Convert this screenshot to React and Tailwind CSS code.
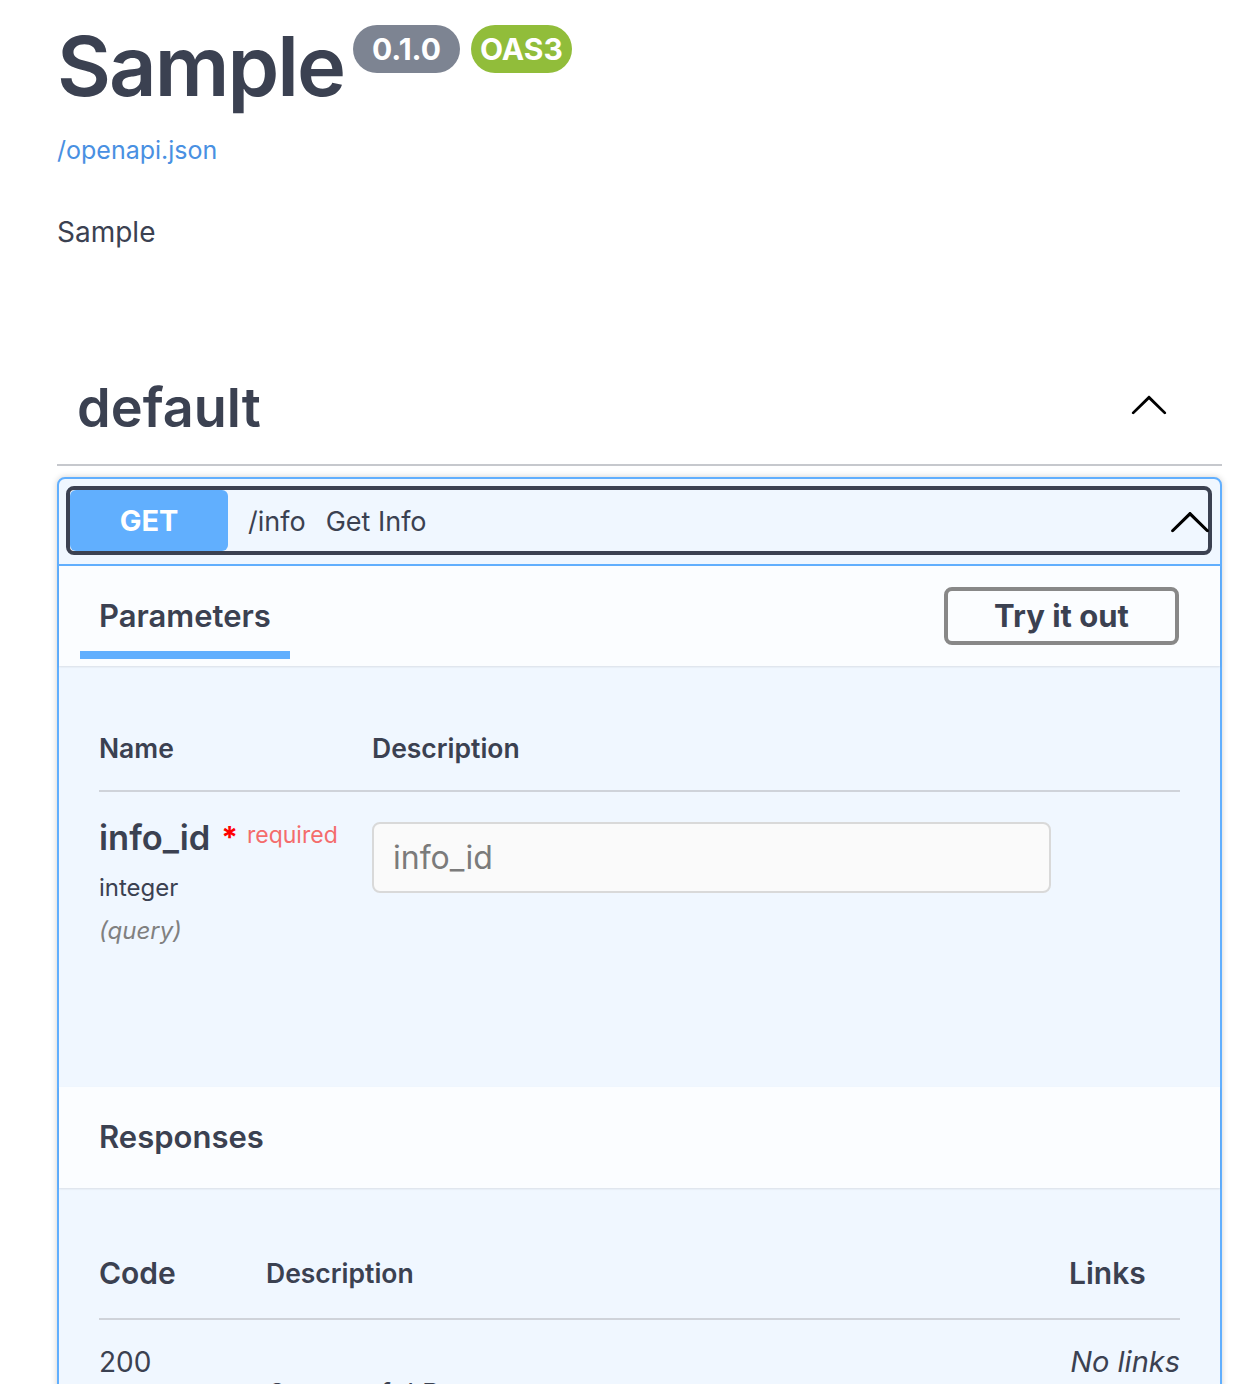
import React from 'react';

function Chevron({ className = "" }) {
  // swagger-ui style arrow, pointing up (expanded)
  return (
    <svg viewBox="0 0 20 20" className={className} fill="currentColor">
      <path d="M 17.418 14.908 C 17.69 15.176 18.127 15.176 18.397 14.908 C 18.667 14.64 18.668 14.207 18.397 13.939 L 10.489 6.109 C 10.219 5.841 9.782 5.841 9.51 6.109 L 1.602 13.939 C 1.332 14.207 1.332 14.64 1.602 14.908 C 1.873 15.176 2.311 15.176 2.581 14.908 L 10 7.767 L 17.418 14.908 Z" />
    </svg>
  );
}

export default function App() {
  return (
    <div className="h-[1384px] overflow-hidden bg-white font-['Inter','Noto_Sans',sans-serif] text-[#3b4151]">
      {/* info */}
      <section className="pl-[57px] pt-[24px]">
        <div className="flex items-start">
          <h2 className="text-[83px] leading-[84px] font-semibold tracking-[-2px]">Sample</h2>
          <div className="flex gap-[11px] ml-[9px] mt-[1px]">
            <span className="h-[48px] px-[19px] rounded-full bg-[#7d8492] text-white font-bold text-[30px] leading-[48px]">0.1.0</span>
            <span className="h-[48px] px-[9px] rounded-full bg-[#91bd3a] text-white font-bold text-[30px] leading-[48px]">OAS3</span>
          </div>
        </div>
        <a className="block mt-[22px] text-[25px] leading-[40px] text-[#4990e2]">/openapi.json</a>
        <p className="mt-[42px] text-[28px] leading-[40px]">Sample</p>
      </section>

      <div className="ml-[57px] w-[1165px]">
        {/* tag header */}
        <div className="mt-[98px] h-[116px] flex items-center justify-between pl-[20px] border-b-2 border-[#c6c8cd]">
          <h3 className="text-[54px] font-semibold leading-[64px] mt-[2px]">default</h3>
          <Chevron className="w-[40px] h-[40px] mr-[53px] mt-[-6px] text-black" />
        </div>

        {/* operation */}
        <div className="mt-[11px] border-2 border-[#61affe] rounded-[8px] bg-[#f0f7ff] shadow-[0_0_6px_rgba(0,0,0,0.19)]">
          <div className="pt-[7px] pl-[7px] pr-[8px] pb-[9px] border-b-2 border-[#61affe]">
            <div className="flex items-center border-4 border-[#3b4151] rounded-[8px]">
              <span className="w-[158px] h-[61px] rounded-[6px] bg-[#61affe] text-white font-bold text-[29px] leading-[61px] text-center">GET</span>
              <span className="ml-[20px] pt-[3px] text-[27px]">/info</span>
              <span className="ml-[20px] pt-[3px] text-[27px]">Get Info</span>
              <Chevron className="ml-auto mr-[-4px] w-[44px] h-[44px] text-black" />
            </div>
          </div>

          {/* parameters tab */}
          <div className="h-[100px] flex items-stretch justify-between pl-[21px] pr-[41px] bg-[#fbfdff] shadow-[0_1px_2px_rgba(0,0,0,0.1)]">
            <div className="flex flex-col justify-end pb-[7px]">
              <span className="px-[19px] text-[31px] font-semibold leading-[40px]">Parameters</span>
              <span className="mt-[15px] h-[8px] bg-[#61affe]"></span>
            </div>
            <button className="self-center w-[235px] h-[58px] border-4 border-[#888] rounded-[8px] text-[31px] font-bold leading-[50px]">Try it out</button>
          </div>

          {/* parameter table */}
          <div className="px-[40px] pt-[66px] h-[421px]">
            <div className="flex pb-[26px] border-b-2 border-[#cfd3da] text-[26.5px] font-semibold leading-[32px]">
              <span className="w-[273px]">Name</span>
              <span>Description</span>
            </div>
            <div className="flex pt-[31px]">
              <div className="w-[273px]">
                <div className="flex items-start">
                  <span className="text-[34.5px] font-semibold leading-[38px] mt-[-4px]">info_id</span>
                  <span className="ml-[11px] text-[30px] leading-[24px] font-bold text-[#f00] mt-[2px]">*</span>
                  <span className="ml-[9px] text-[23px] leading-[24px] text-[#f46c6c]">required</span>
                </div>
                <div className="mt-[15px] text-[24px] leading-[32px]">integer</div>
                <div className="mt-[11px] text-[24px] leading-[32px] italic text-[#808080]">(query)</div>
              </div>
              <input
                placeholder="info_id"
                className="mt-[-1px] w-[679px] h-[71px] border-2 border-[#d9d9d9] rounded-[8px] bg-[#fafafa] px-[19px] text-[32px] placeholder:text-[#7b7b7b] outline-none"
              />
            </div>
          </div>

          {/* responses header */}
          <div className="h-[101px] flex items-center px-[40px] bg-[#fbfdff] shadow-[0_1px_2px_rgba(0,0,0,0.1)]">
            <span className="text-[31px] font-semibold">Responses</span>
          </div>

          {/* responses table */}
          <div className="px-[40px] pt-[69px]">
            <div className="flex items-center pb-[29px] border-b-2 border-[#cfd3da] leading-[32px]">
              <span className="w-[167px] text-[30px] font-semibold">Code</span>
              <span className="flex-1 text-[26.5px] font-semibold">Description</span>
              <span className="w-[111px] text-[30px] font-semibold">Links</span>
            </div>
            <div className="flex pt-[22px] text-[28px] leading-[40px]">
              <span className="w-[167px]">200</span>
              <span className="flex-1 pt-[32px] pl-[2px]">Successful Response</span>
              <span className="w-[111px] text-right italic text-[29px] whitespace-nowrap">No links</span>
            </div>
          </div>
        </div>
      </div>
    </div>
  );
}
